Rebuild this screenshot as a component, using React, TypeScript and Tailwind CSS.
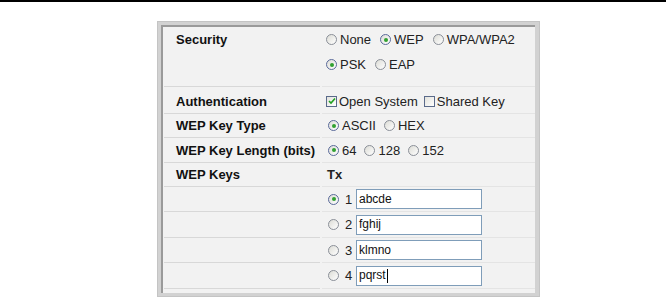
import React from "react";

function Radio({ checked = false }: { checked?: boolean }) {
  return (
    <span
      className={
        "inline-flex items-center justify-center w-[11px] h-[11px] rounded-full border bg-gradient-to-br from-[#dcdcd6] to-[#ffffff] shrink-0 " +
        (checked ? "border-[#5a6a9a]" : "border-[#8a8f98]")
      }
    >
      {checked && <span className="w-[4px] h-[4px] rounded-full bg-[#31a131]" />}
    </span>
  );
}

function Check({ checked = false }: { checked?: boolean }) {
  return (
    <span className="inline-flex items-center justify-center w-[11px] h-[11px] border border-[#5a6a8a] bg-gradient-to-br from-[#e2e2dc] to-[#ffffff] shrink-0">
      {checked && (
        <svg width="8" height="8" viewBox="0 0 8 8">
          <path d="M1 4 L3 6 L7 1.5" stroke="#21a121" strokeWidth="1.6" fill="none" />
        </svg>
      )}
    </span>
  );
}

function Opt({ checked, label }: { checked?: boolean; label: string }) {
  return (
    <span className="inline-flex items-center gap-[3px]">
      <Radio checked={checked} />
      <span>{label}</span>
    </span>
  );
}

function Row({
  label,
  h,
  children,
}: {
  label?: string;
  h: string;
  children?: React.ReactNode;
}) {
  return (
    <div className={"flex " + h}>
      <div className="w-[156px] shrink-0 border-b border-[#d8d8d8] pl-[12px] font-bold text-[13px] leading-[15px] text-[#111] flex items-center">
        {label}
      </div>
      <div className="flex-1 ml-[2px] border-b border-[#e4e4e4] pl-[4px] text-[13px] leading-[15px] text-[#222] flex flex-col justify-center">
        {children}
      </div>
    </div>
  );
}

function KeyRow({ n, val, checked, cursor, h = "h-[25px]" }: { n: string; val: string; checked?: boolean; cursor?: boolean; h?: string }) {
  return (
    <Row h={h}>
      <div className="flex items-center pl-[2px]">
        <Radio checked={checked} />
        <span className="ml-[6px] w-[11px]">{n}</span>
        <div className="w-[126px] h-[20px] border border-[#7f9db9] bg-white flex items-center pl-[2px] text-[12px] text-[#111]">
          {val}
          {cursor && <span className="w-[1px] h-[14px] bg-black ml-[1px]" />}
        </div>
      </div>
    </Row>
  );
}

export default function App() {
  return (
    <div
      className="w-[666px] h-[297px] bg-white relative overflow-hidden"
      style={{ fontFamily: '"Liberation Sans", Arial, sans-serif' }}
    >
      <div className="h-[2px] bg-black w-full" />
      <div className="ml-[157px] mt-[19px] w-[383px] h-[276px] border border-[#c4c4c4] bg-[#d2d2d2] p-[3px] pr-[4px]">
        <div className="h-full border-l-[2px] border-t-[2px] border-[#9a9a9a] bg-[#f2f2f2] pl-[1px]">
          <div className="flex h-[60px]">
            <div className="w-[156px] shrink-0 border-b border-[#d8d8d8] pl-[12px] pt-[5px] font-bold text-[13px] leading-[15px] text-[#111]">
              Security
            </div>
            <div className="flex-1 ml-[2px] border-b border-[#e4e4e4] pl-[4px] text-[13px] leading-[15px] text-[#222] flex flex-col gap-[10px] pt-[5px]">
              <div className="flex items-center gap-[9px]">
                <Opt label="None" />
                <Opt checked label="WEP" />
                <Opt label="WPA/WPA2" />
              </div>
              <div className="flex items-center gap-[9px]">
                <Opt checked label="PSK" />
                <Opt label="EAP" />
              </div>
            </div>
          </div>
          <div className="h-[2px]" />
          <Row label="Authentication" h="h-[25px]">
            <div className="flex items-center gap-[6px]">
              <span className="inline-flex items-center gap-[2px]">
                <Check checked />
                <span>Open System</span>
              </span>
              <span className="inline-flex items-center gap-[2px]">
                <Check />
                <span>Shared Key</span>
              </span>
            </div>
          </Row>
          <Row label="WEP Key Type" h="h-[24px]">
            <div className="flex items-center gap-[8px] pl-[2px]">
              <Opt checked label="ASCII" />
              <Opt label="HEX" />
            </div>
          </Row>
          <Row label="WEP Key Length (bits)" h="h-[25px]">
            <div className="flex items-center gap-[8px] pl-[2px]">
              <Opt checked label="64" />
              <Opt label="128" />
              <Opt label="152" />
            </div>
          </Row>
          <Row label="WEP Keys" h="h-[24px]">
            <div className="font-bold pl-[1px]">Tx</div>
          </Row>
          <KeyRow n="1" val="abcde" checked />
          <KeyRow n="2" val="fghij" h="h-[26px]" />
          <KeyRow n="3" val="klmno" />
          <KeyRow n="4" val="pqrst" cursor h="h-[26px]" />
        </div>
      </div>
    </div>
  );
}
